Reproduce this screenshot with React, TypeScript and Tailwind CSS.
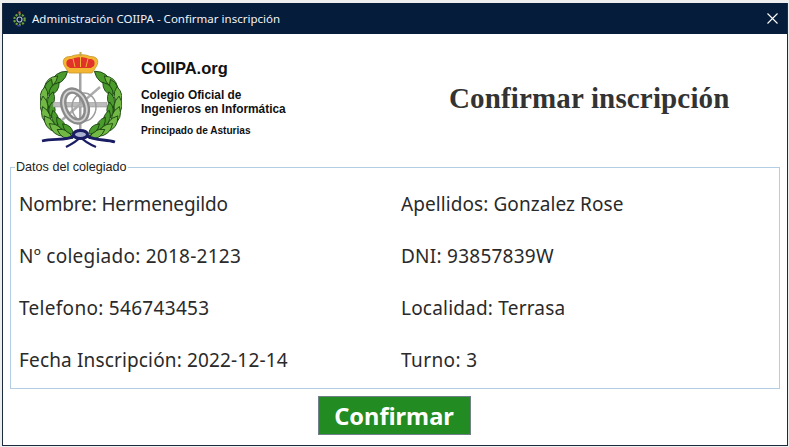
function Laurel({ flip }: { flip?: boolean }) {
  const leaves: number[][] = [
    [19, 26, 52, 11], [11, 30, 48, 9], [8, 36, 22, 9.500], [4, 44, 6, 9.500], [14, 37, 38, 8.500],
    [4, 54, -6, 10], [11, 48, 14, 8.500], [6, 64, -20, 10], [12, 58, 2, 8], [10, 72, -36, 10],
    [15, 66, -16, 8], [17, 78, -50, 10], [21, 72, -32, 8], [25, 82, -60, 9], [28, 77, -46, 7.500],
  ];
  return (
    <g transform={flip ? "translate(82 0) scale(-1 1)" : undefined}>
      <path d="M24 24C10 34 6 52 9 64C12 74 22 80 36 85" fill="none" stroke="#17470f" strokeWidth="1.400" />
      {leaves.map(([x, y, r, s], i) => (
        <path
          key={i}
          d={`M0 ${-s}Q${s * 0.8} 0 0 ${s}Q${-s * 0.8} 0 0 ${-s}Z`}
          transform={`translate(${x} ${y}) rotate(${r})`}
          fill={i % 2 ? "#72b845" : "#4b9a2c"}
          stroke="#153f0e"
          strokeWidth="0.800"
        />
      ))}
    </g>
  );
}

function Logo() {
  return (
    <svg width="82" height="97" viewBox="0 0 82 97" className="shrink-0">
      <Laurel />
      <Laurel flip />
      <rect x="39" y="20" width="2.500" height="64" fill="#a3a3a3" />
      <rect x="13" y="50.500" width="54" height="4.500" fill="#bcbcbc" stroke="#8a8a8a" strokeWidth="0.500" />
      <path d="M22 68L60 35" stroke="#adadad" strokeWidth="2.400" />
      <ellipse cx="44" cy="55" rx="12" ry="14" fill="none" stroke="#9d9d9d" strokeWidth="1.500" />
      <ellipse cx="35" cy="54" rx="11" ry="16" fill="none" stroke="#8a8a8a" strokeWidth="6.500" transform="rotate(-22 35 54)" />
      <ellipse cx="35" cy="54" rx="11" ry="16" fill="none" stroke="#d4d4d4" strokeWidth="1.800" transform="rotate(-22 35 54)" />
      <path d="M25 15C21 9 24 4 31 4.500C35 2 46 2 50 4.500C57 4 60 9 56 15L52 21H29Z" fill="#f2b632" stroke="#c79528" strokeWidth="0.800" />
      <path d="M27 14C25 9 28 6.500 32 7C36 4.500 45 4.500 49 7C53 6.500 56 9 54 14L51 16H30Z" fill="#e2332a" />
      <path d="M33 6.500L35 15M40.500 4.500V15M48 6.500L46 15" stroke="#f2b632" strokeWidth="1" fill="none" />
      <rect x="39.500" y="0" width="2" height="4" fill="#c4a64a" />
      <path d="M2 89C14 86 26 89 34 84M47 84C55 89 66 87 75 90" fill="none" stroke="#1a1d63" strokeWidth="2.800" />
      <path d="M26 95C32 92 37 89 40.500 85C44 89 49 92 56 95" fill="none" stroke="#1a1d63" strokeWidth="2.200" />
      <ellipse cx="40.500" cy="82.500" rx="7" ry="4" fill="#aab0d0" stroke="#1a1d63" strokeWidth="3" />
    </svg>
  );
}

function TitleIcon() {
  return (
    <svg width="16" height="16" viewBox="0 0 16 16" className="shrink-0">
      <circle cx="7.500" cy="8.500" r="5.200" fill="none" stroke="#6ea23a" strokeWidth="2.200" strokeDasharray="2 1.300" />
      <circle cx="7.500" cy="8.500" r="2.500" fill="none" stroke="#b4b9c2" strokeWidth="1.200" />
      <rect x="6.500" y="0.500" width="2" height="2" fill="#e0672a" />
      <rect x="5.500" y="14" width="3" height="1.500" fill="#4b3fa0" />
    </svg>
  );
}

function Field({ children, tracking }: { children: string; tracking: string }) {
  return <div className={`flex h-[52px] items-center text-[19px] leading-[24px] text-[#2a2a2a] ${tracking}`}>{children}</div>;
}

export default function App() {
  return (
    <div className="h-[447px] w-[789px] overflow-hidden bg-[#eeeeee] pl-[2px] pt-[3px] font-['Noto_Sans',sans-serif]">
      <div className="flex h-[443px] w-[786px] flex-col border-x border-b border-[#1d2b3e] bg-white">
        <header className="flex h-[31px] shrink-0 items-center bg-[#051c3b] px-[9px] text-white">
          <TitleIcon />
          <span className="ml-[4px] text-[11.5px] leading-[16px] text-[#f2f4f7]">Administración COIIPA - Confirmar inscripción</span>
          <svg width="11" height="11" viewBox="0 0 11 11" className="ml-auto">
            <path d="M.5.5l10 10M10.500.5l-10 10" stroke="#fff" strokeWidth="1.100" />
          </svg>
        </header>
        <div className="flex h-[126px] shrink-0 items-center pl-[37px] pt-[6px]">
          <Logo />
          <div className="ml-[19px] mt-[-5px] flex w-[158px] flex-col font-['Liberation_Sans',sans-serif] font-bold text-[#111]">
            <span className="text-[16.5px] leading-[20px]">COIIPA.org</span>
            <span className="mt-[10px] text-[11.9px] leading-[14px]">Colegio Oficial de<br />Ingenieros en Informática</span>
            <span className="mt-[9px] text-[10.1px] leading-[12px]">Principado de Asturias</span>
          </div>
          <h1 className="ml-[150px] mt-[-2px] whitespace-nowrap font-['Liberation_Serif',serif] text-[29px] font-bold tracking-[0.15px] text-[#333]">Confirmar inscripción</h1>
        </div>
        <fieldset className="mx-[7px] h-[229px] shrink-0 border border-[#b3cde4] px-[8px]">
          <legend className="ml-[-4px] px-[1px] font-['Liberation_Sans',sans-serif] text-[12.6px] leading-[14px] text-[#222]">Datos del colegiado</legend>
          <div className="grid grid-cols-[382px_1fr] pt-[4px]">
            <Field tracking="tracking-[-0.15px]">Nombre: Hermenegildo</Field>
            <Field tracking="tracking-[0.08px]">Apellidos: Gonzalez Rose</Field>
            <Field tracking="tracking-[0.25px]">Nº colegiado: 2018-2123</Field>
            <Field tracking="tracking-[0.25px]">DNI: 93857839W</Field>
            <Field tracking="tracking-[0.3px]">Telefono: 546743453</Field>
            <Field tracking="tracking-[0.2px]">Localidad: Terrasa</Field>
            <Field tracking="tracking-[0.15px]">Fecha Inscripción: 2022-12-14</Field>
            <Field tracking="tracking-[0.4px]">Turno: 3</Field>
          </div>
        </fieldset>
        <div className="flex flex-1 items-start justify-center pr-[2px] pt-[7px]">
          <button className="h-[39px] w-[153px] border border-[#6f8088] bg-[#228b22] pt-[2px] text-[23.6px] font-bold leading-none text-white">Confirmar</button>
        </div>
      </div>
    </div>
  );
}
